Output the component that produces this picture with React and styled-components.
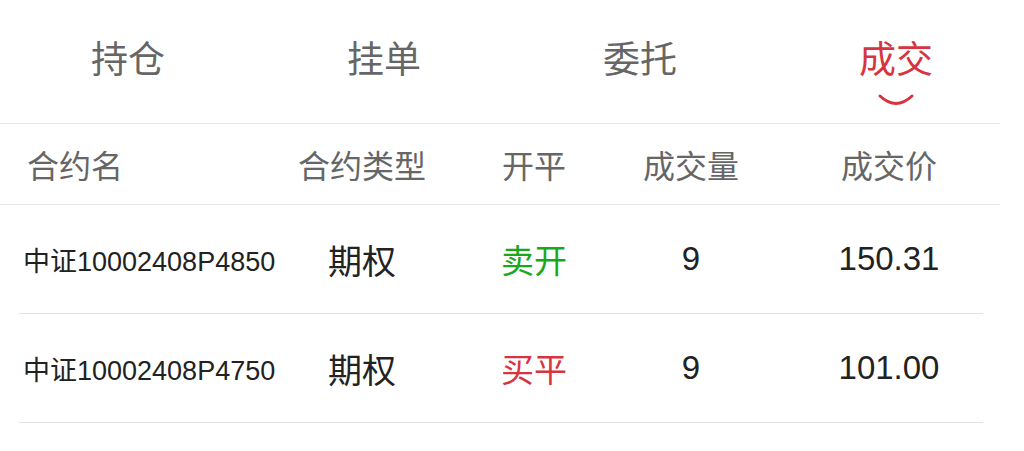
import React from "react";
import styled, { createGlobalStyle } from "styled-components";

const GlobalStyle = createGlobalStyle`
  html, body {
    margin: 0;
    padding: 0;
    background: #ffffff;
  }
  body {
    font-family: "Liberation Sans", "Noto Sans CJK SC", sans-serif;
    -webkit-font-smoothing: antialiased;
  }
`;

const Page = styled.div`
  width: 1024px;
  height: 451px;
  background: #ffffff;
  overflow: hidden;
`;

const TabBar = styled.div`
  display: grid;
  grid-template-columns: repeat(4, 256px);
  height: 123px;
`;

const Tab = styled.div`
  display: flex;
  flex-direction: column;
  align-items: center;
  padding-top: 35px;
  font-family: "Noto Sans CJK SC", sans-serif;
  font-size: 37px;
  line-height: 44px;
  color: ${(p) => (p.$active ? "#d8343f" : "#666666")};
`;

const Smile = styled.svg`
  margin-top: 13px;
  display: block;
`;

const Divider = styled.div`
  width: 1000px;
  height: 1px;
  background: #e6e6e6;
`;

const COLS = "224px 120px 194px 202px";

const HeaderRow = styled.div`
  display: grid;
  grid-template-columns: 250px ${COLS};
  align-items: center;
  width: 1000px;
  height: 80px;
  border-bottom: 1px solid #e6e6e6;
`;

const HeadCell = styled.div`
  font-family: "Noto Sans CJK SC", sans-serif;
  font-size: 32px;
  color: #666666;
  text-align: ${(p) => (p.$left ? "left" : "center")};
  padding-left: ${(p) => (p.$left ? "27px" : "0")};
  white-space: nowrap;
`;

const DataRow = styled.div`
  display: grid;
  grid-template-columns: 231px ${COLS};
  align-items: center;
  width: 964px;
  margin-left: 19px;
  height: 108px;
  border-bottom: 1px solid #e3e3e3;
`;

const NameCell = styled.div`
  font-size: 27px;
  color: #222222;
  padding-left: 4px;
  white-space: nowrap;
`;

const TypeCell = styled.div`
  font-family: "Noto Sans CJK SC", sans-serif;
  font-size: 34px;
  color: #222222;
  text-align: center;
`;

const SideCell = styled.div`
  font-family: "Noto Sans CJK SC", sans-serif;
  font-size: 33px;
  text-align: center;
  color: ${(p) => (p.$side === "open" ? "#1aa81a" : "#d8343f")};
`;

const NumCell = styled.div`
  font-size: 33px;
  color: #222222;
  text-align: center;
  white-space: nowrap;
`;

const tabs = ["持仓", "挂单", "委托", "成交"];

const rows = [
  { name: "中证10002408P4850", type: "期权", side: "卖开", kind: "open", qty: "9", price: "150.31" },
  { name: "中证10002408P4750", type: "期权", side: "买平", kind: "close", qty: "9", price: "101.00" },
];

export default function App() {
  return (
    <Page>
      <GlobalStyle />
      <TabBar>
        {tabs.map((t, i) => (
          <Tab key={t} $active={i === 3}>
            <span>{t}</span>
            {i === 3 && (
              <Smile width="38" height="16" viewBox="0 0 38 16">
                <path
                  d="M3 4 Q19 19 35 4"
                  fill="none"
                  stroke="#d8343f"
                  strokeWidth="3"
                  strokeLinecap="round"
                />
              </Smile>
            )}
          </Tab>
        ))}
      </TabBar>
      <Divider />
      <HeaderRow>
        <HeadCell $left>合约名</HeadCell>
        <HeadCell>合约类型</HeadCell>
        <HeadCell>开平</HeadCell>
        <HeadCell>成交量</HeadCell>
        <HeadCell>成交价</HeadCell>
      </HeaderRow>
      {rows.map((r) => (
        <DataRow key={r.name}>
          <NameCell>{r.name}</NameCell>
          <TypeCell>{r.type}</TypeCell>
          <SideCell $side={r.kind}>{r.side}</SideCell>
          <NumCell>{r.qty}</NumCell>
          <NumCell>{r.price}</NumCell>
        </DataRow>
      ))}
    </Page>
  );
}
